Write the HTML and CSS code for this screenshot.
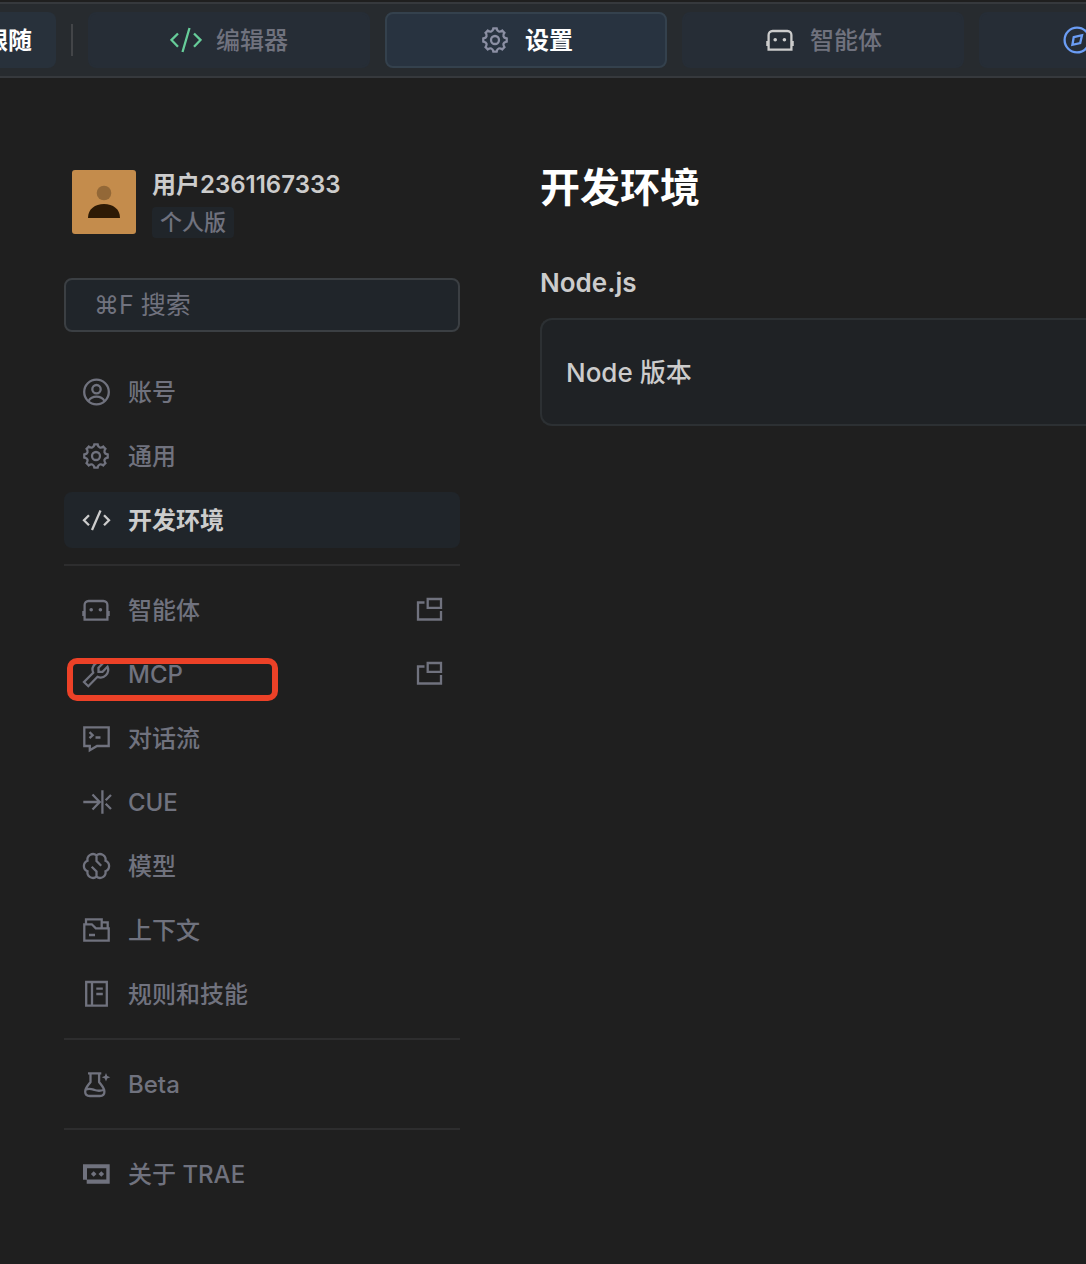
FILE: index.html
```
<!DOCTYPE html>
<html lang="zh-CN">
<head>
    <meta charset="UTF-8">
    <meta name="viewport" content="width=device-width, initial-scale=1">
    <title>设置 - 开发环境</title>
    <link rel="stylesheet" href="styles.css">
</head>
<body>
    <!-- 共用图标 -->
    <svg class="sprite" aria-hidden="true">
        <symbol id="icon-gear" viewBox="0 0 32 32">
            <path transform="translate(16 16)" d="M-1.6-11.7H1.6C2.2-8 4.8-7.6 7.2-9.4L9.4-7.2C7.6-4.8 8-2.2 11.7-1.6V1.6C8 2.2 7.6 4.8 9.4 7.2L7.2 9.4C4.8 7.6 2.2 8 1.6 11.7H-1.6C-2.2 8-4.8 7.6-7.2 9.4L-9.4 7.2C-7.6 4.8-8 2.2-11.7 1.6V-1.6C-8-2.2-7.6-4.8-9.4-7.2L-7.2-9.4C-4.8-7.6-2.2-8-1.6-11.7Z"/>
            <circle cx="16" cy="16" r="4"/>
        </symbol>
        <symbol id="icon-agent" viewBox="0 0 32 32">
            <path d="M4.6 25.7V11a4 4 0 0 1 4-4h14.8a4 4 0 0 1 4 4v14.7zM3.4 17v5M28.6 17v5"/>
            <circle class="solid" cx="11.2" cy="15.8" r="1.8"/>
            <circle class="solid" cx="20.4" cy="15.8" r="1.8"/>
        </symbol>
        <symbol id="icon-window" viewBox="0 0 32 32">
            <path d="M12.5 8.500H6v17h23V17M15.700 5H29v8.800H15.700z"/>
        </symbol>
    </svg>

    <!-- 顶部标签栏 -->
    <header class="topbar">
        <button class="follow" type="button">跟随</button>
        <span class="topbar-divider"></span>
        <button class="tab" type="button">
            <svg class="icon green" viewBox="0 0 32 32"><path d="M8 9.5L1.5 16 8 22.8M24 9.5l6.5 6.5-6.5 6.8M19.5 4l-7 24"/></svg>
            <span>编辑器</span>
        </button>
        <button class="tab active" type="button">
            <svg class="icon"><use href="#icon-gear"/></svg>
            <span>设置</span>
        </button>
        <button class="tab" type="button">
            <svg class="icon light"><use href="#icon-agent"/></svg>
            <span>智能体</span>
        </button>
        <button class="tab tab-browser" type="button" aria-label="浏览器">
            <svg class="icon blue" viewBox="0 0 32 32"><circle cx="16" cy="16" r="12.4"/><path d="M12.7 13.2l8.3-2-1.8 7.8-7.8 1.8z"/></svg>
        </button>
    </header>

    <div class="layout">
        <aside class="sidebar">
            <div class="profile">
                <svg class="avatar" viewBox="0 0 64 64">
                    <rect width="64" height="64" rx="3" fill="#c48c4c"/>
                    <circle cx="32" cy="23" r="7.3" fill="#936837"/>
                    <path d="M16 48c0-9 7-14 16-14s16 5 16 14z" fill="#2d1a05"/>
                </svg>
                <div class="profile-info">
                    <div class="username">用户2361167333</div>
                    <span class="plan">个人版</span>
                </div>
            </div>

            <input class="search" type="search" placeholder="⌘F 搜索" aria-label="搜索">

            <nav>
                <div class="nav-group">
                    <a class="nav-item" href="#account">
                        <svg class="icon" viewBox="0 0 32 32"><circle cx="16.5" cy="16" r="12.3"/><circle cx="16.5" cy="13.2" r="4.2"/><path d="M8.5 25c1.800-3 4.600-4.300 8-4.300s6.200 1.300 8 4.300"/></svg>
                        <span>账号</span>
                    </a>
                    <a class="nav-item" href="#general">
                        <svg class="icon"><use href="#icon-gear"/></svg>
                        <span>通用</span>
                    </a>
                    <a class="nav-item active" href="#env">
                        <svg class="icon" viewBox="0 0 32 32"><path d="M9 11.3l-5 5 5 5M24 11.3l5 5-5 5M20.5 6.500L12 26"/></svg>
                        <span>开发环境</span>
                    </a>
                </div>

                <div class="nav-group">
                    <a class="nav-item" href="#agents">
                        <svg class="icon"><use href="#icon-agent"/></svg>
                        <span>智能体</span>
                        <svg class="icon open"><use href="#icon-window"/></svg>
                    </a>
                    <a class="nav-item" href="#mcp">
                        <svg class="icon" viewBox="0 0 32 32"><path d="M23.5 4.8l-5 5v4h4l5-5a7.6 7.6 0 0 1-10 10L8.3 28.2 4 24l9.2-9.3A7.6 7.6 0 0 1 23.5 4.8z"/></svg>
                        <span>MCP</span>
                        <svg class="icon open"><use href="#icon-window"/></svg>
                        <i class="marker"></i>
                    </a>
                    <a class="nav-item" href="#chat">
                        <svg class="icon" viewBox="0 0 32 32"><path d="M4.3 5.3h24.4V24H17l-7.2 4.200V24H4.300zM9.500 10.200l3.200 3-3.200 3M15.500 15.500h5"/></svg>
                        <span>对话流</span>
                    </a>
                    <a class="nav-item" href="#cue">
                        <svg class="icon" viewBox="0 0 32 32"><path d="M3.3 16h16M12.5 8.5l7.2 7.5-7.2 7.5M22.4 4.3v23.4M31 9l-5.3 5.3M25.7 17.7L31 23"/></svg>
                        <span>CUE</span>
                    </a>
                    <a class="nav-item" href="#models">
                        <svg class="icon" viewBox="0 0 32 32"><path d="M16.5 5.3A5.6 5.6 0 0 1 25.500 10.700a5.700 5.700 0 0 1 0 10.600A5.600 5.600 0 0 1 16.500 26.700 5.600 5.600 0 0 1 7.500 21.300a5.700 5.700 0 0 1 0-10.600A5.600 5.600 0 0 1 16.500 5.300zV11l4.700 4.700M16.500 26.700v-5.200l-4.800-4.700"/></svg>
                        <span>模型</span>
                    </a>
                    <a class="nav-item" href="#context">
                        <svg class="icon" viewBox="0 0 32 32"><path d="M4.3 26.7V10.3h7.5l4 4h12.9v12.4zM6 10V5.3h15.7v9M21.7 8.3h6v6M9 21h6"/></svg>
                        <span>上下文</span>
                    </a>
                    <a class="nav-item" href="#rules">
                        <svg class="icon" viewBox="0 0 32 32"><path d="M6.2 4h20.6v23.7H6.2zM12 4v23.7M16.3 10.7h6.5M16.3 16h6.5"/></svg>
                        <span>规则和技能</span>
                    </a>
                </div>

                <div class="nav-group">
                    <a class="nav-item" href="#beta">
                        <svg class="icon" viewBox="0 0 32 32"><path d="M8 5.3h13.3M10.5 5.3V14c-2 3-5.3 5.8-5.3 9.700 0 3 2 4.300 4.600 4.300h10c2.600 0 4.600-1.300 4.600-4.300 0-3.900-3.300-6.700-5.300-9.700V5.300M6 21.500c3.500-1.500 5.500-.5 8.500.5s6 1 9.200 0"/><path class="solid" d="M26 5l1.200 3.100 3.100 1.200-3.100 1.200-1.200 3.100-1.200-3.100-3.100-1.200 3.100-1.200z"/></svg>
                        <span>Beta</span>
                    </a>
                </div>

                <div class="nav-group">
                    <a class="nav-item" href="#about">
                        <svg class="icon" viewBox="0 0 32 32"><path class="solid" fill-rule="evenodd" d="M3 6.3h26.700v19.400H6.700v-4H3zM7 10.300v11.200h19.300V10.300zM13.700 13.200l2.800 2.800-2.800 2.800-2.800-2.800zM21.300 13.200l2.800 2.800-2.800 2.800-2.800-2.800z"/></svg>
                        <span>关于 TRAE</span>
                    </a>
                </div>
            </nav>
        </aside>

        <main class="content">
            <h1>开发环境</h1>
            <h2>Node.js</h2>
            <div class="card"><span>Node 版本</span></div>
        </main>
    </div>
</body>
</html>
```
FILE: styles.css
```
* {
    box-sizing: border-box;
}

body {
    margin: 0;
    background: #1f1f1f;
    color: #cccccc;
    font-family: Inter, "Noto Sans CJK SC", sans-serif;
    font-size: 24px;
    font-weight: 500;
    line-height: 32px;
    overflow-x: hidden;
}

button,
input {
    font: inherit;
}

.sprite {
    position: absolute;
    width: 0;
    height: 0;
}

.icon {
    flex: none;
    width: 32px;
    height: 32px;
    fill: none;
    stroke: currentColor;
    stroke-width: 2.3;
}

.solid {
    fill: currentColor;
    stroke: none;
}

/* 顶部标签栏 */
.topbar {
    display: flex;
    align-items: center;
    gap: 15px;
    margin-top: 2px;
    padding: 8px 0;
    background: #272b2f;
    border-top: 2px solid #36393d;
    border-bottom: 2px solid #36393d;
    overflow: hidden;
}

.follow {
    display: flex;
    justify-content: flex-end;
    align-items: center;
    flex: none;
    width: 56px;
    height: 56px;
    padding: 2px 24px 0 0;
    border: none;
    border-radius: 0 8px 8px 0;
    background: #28313b;
    color: #ffffff;
    font-weight: 700;
    white-space: nowrap;
    overflow: hidden;
}

.topbar-divider {
    flex: none;
    width: 2px;
    height: 32px;
    background: #434548;
}

.tab {
    display: flex;
    align-items: center;
    justify-content: center;
    gap: 14px;
    flex: none;
    width: 282px;
    height: 56px;
    padding: 0;
    border: 2px solid #262d36;
    border-radius: 8px;
    background: #262d36;
    color: #70727e;
}

.tab span,
.nav-item span,
.card span {
    padding-top: 2px;
}

.tab.active {
    background: #283340;
    border-color: #34414d;
    color: #ffffff;
    font-weight: 700;
}

.tab.active .icon {
    color: #8b8fa3;
}

.tab .green {
    color: #66cc99;
}

.tab .light {
    color: #cccccc;
}

.tab .blue {
    color: #6b9df5;
}

.tab-browser {
    justify-content: flex-start;
    padding-left: 80px;
}

/* 主体 */
.layout {
    display: flex;
    gap: 80px;
    padding: 86px 0 62px 64px;
}

.sidebar {
    flex: none;
    width: 396px;
}

.profile {
    display: flex;
    gap: 16px;
    padding: 6px 8px 0;
}

.avatar {
    flex: none;
    width: 64px;
    height: 64px;
}

.username {
    font-weight: 600;
    line-height: 30px;
}

.plan {
    display: block;
    width: fit-content;
    margin-top: 7px;
    padding: 0 8px;
    border-radius: 4px;
    background: #20252a;
    color: #70727e;
    font-size: 22px;
    line-height: 31px;
}

.search {
    display: block;
    width: 100%;
    height: 54px;
    margin: 40px 0 32px;
    padding: 0 28px;
    border: 2px solid #3b3f43;
    border-radius: 8px;
    outline: none;
    background: #20252a;
    color: #cccccc;
    font-size: 25px;
    font-weight: 400;
    appearance: none;
}

.search::placeholder {
    color: #70727e;
    opacity: 1;
}

.nav-group {
    display: flex;
    flex-direction: column;
    gap: 8px;
}

.nav-group + .nav-group {
    margin-top: 16px;
    padding-top: 16px;
    border-top: 2px solid #2d2d2e;
}

.nav-item {
    position: relative;
    display: flex;
    align-items: center;
    gap: 16px;
    height: 56px;
    padding: 0 16px;
    border-radius: 8px;
    color: #70727e;
    text-decoration: none;
}

.nav-item.active {
    background: #20252a;
    color: #cccccc;
    font-weight: 700;
}

.nav-item .open {
    margin-left: auto;
}

/* 红框标注 */
.marker {
    position: absolute;
    top: 12px;
    left: 3px;
    width: 211px;
    height: 43px;
    border: 6px solid #ec4127;
    border-radius: 10px;
}

.content {
    flex: 1;
    min-width: 0;
}

.content h1 {
    margin: 0;
    color: #ffffff;
    font-size: 40px;
    font-weight: 700;
    line-height: 48px;
}

.content h2 {
    margin: 55px 0 19px;
    font-size: 26px;
    font-weight: 600;
    line-height: 32px;
}

.card {
    display: flex;
    align-items: center;
    height: 108px;
    padding: 0 24px;
    border: 2px solid #2c3033;
    border-right: none;
    border-radius: 12px 0 0 12px;
    background: #1f2225;
    font-size: 26px;
}
```
